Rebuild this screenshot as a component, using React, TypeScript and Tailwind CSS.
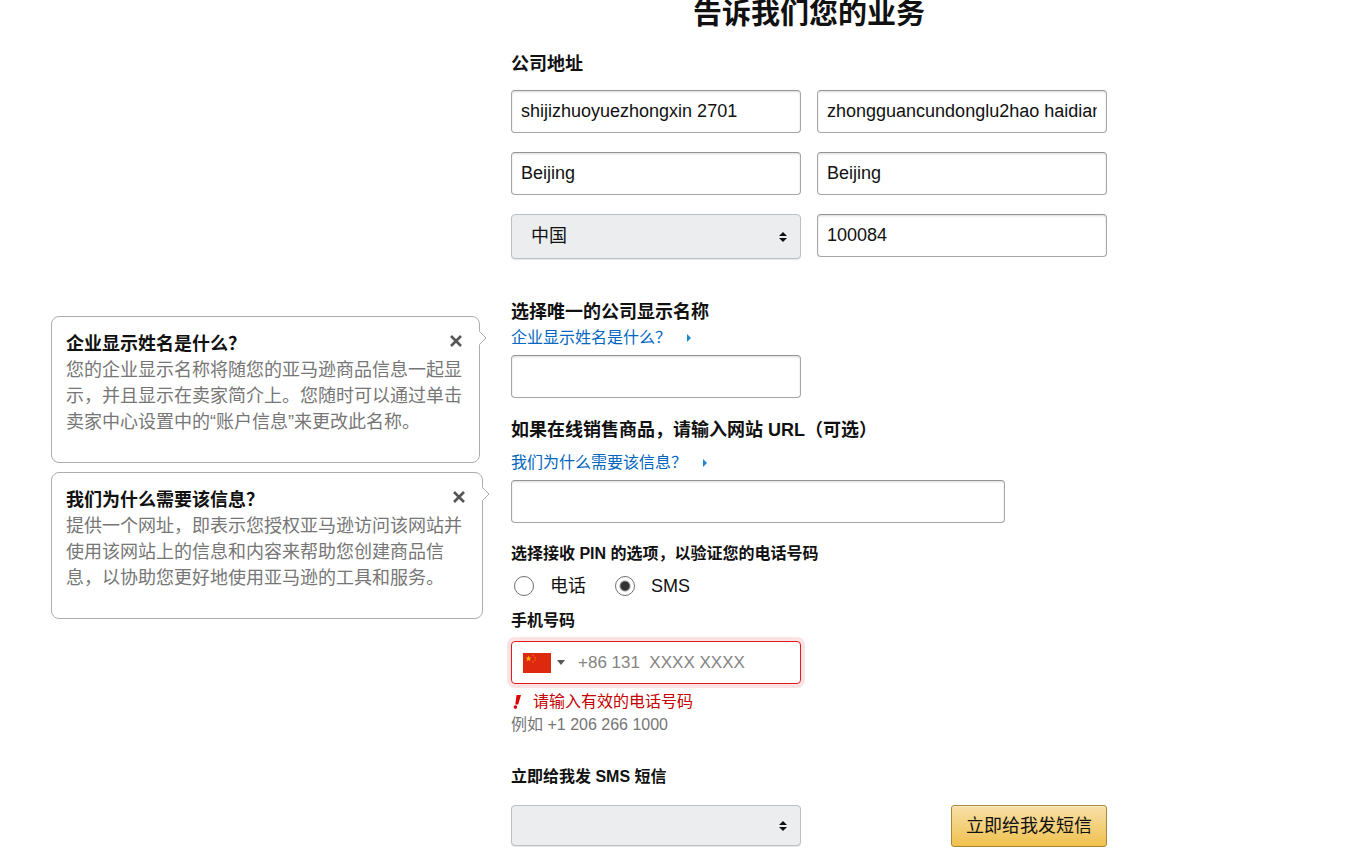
import type { ReactNode } from "react";

const inputClass =
  "block h-[43px] w-full min-w-0 rounded border border-[#a6a6a6] border-t-[#949494] bg-white px-[9px] text-[18px] text-[#111] shadow-[inset_0_1px_2px_rgba(15,17,17,0.15)] outline-none";

const TextField = ({
  label,
  name,
  value,
}: {
  label: string;
  name: string;
  value: string;
}) => (
  <input
    type="text"
    aria-label={label}
    name={name}
    defaultValue={value}
    className={inputClass}
  />
);

const SelectField = ({
  id,
  label,
  className,
  children,
}: {
  id: string;
  label?: string;
  className: string;
  children?: ReactNode;
}) => (
  <div className="relative">
    <select
      id={id}
      aria-label={label}
      className={`block w-full appearance-none rounded border border-[#bbbfc6] bg-[#ecedef] pl-[19px] pr-8 text-[18px] text-[#111] shadow-[0_1px_1px_rgba(15,17,17,0.1)] outline-none ${className}`}
    >
      {children}
    </select>
    <svg
      viewBox="0 0 8 10"
      className="pointer-events-none absolute right-[14px] top-1/2 h-[10px] w-2 -translate-y-1/2"
    >
      <path d="M4 0 8 4H0ZM4 10 0 6h8Z" fill="#111" />
    </svg>
  </div>
);

const HelpLink = ({ children }: { children: ReactNode }) => (
  <a
    href="#"
    className="flex w-fit items-center gap-4 text-[16px] leading-6 text-[#0066c0]"
  >
    {children}
    <svg viewBox="0 0 4 8" className="h-2 w-1">
      <path d="M0 0 4 4 0 8Z" fill="#1e88cf" />
    </svg>
  </a>
);

const HelpCard = ({
  title,
  className,
  children,
}: {
  title: string;
  className: string;
  children: ReactNode;
}) => (
  <section
    className={`relative rounded-lg border border-[#adadad] bg-white px-[14px] pb-[27px] pt-[14px] ${className}`}
  >
    <div className="flex items-start justify-between">
      <h2 className="text-[18px] font-bold leading-[26px]">{title}</h2>
      <button type="button" aria-label="关闭" className="mr-[3px] mt-1">
        <svg viewBox="0 0 12 12" className="h-3 w-3">
          <path d="M1 1 11 11M11 1 1 11" stroke="#555" strokeWidth="2.6" />
        </svg>
      </button>
    </div>
    <p className="text-[18px] leading-[26px] text-[#767676]">{children}</p>
    <svg
      viewBox="0 0 8 14"
      className="absolute -right-2 top-[14px] h-[14px] w-2"
    >
      <path d="M0 0 7 7 0 14Z" fill="#fff" />
      <path d="M.5 .5 7 7 .5 13.5" fill="none" stroke="#adadad" />
    </svg>
  </section>
);

const Radio = ({
  label,
  checked = false,
}: {
  label: string;
  checked?: boolean;
}) => (
  <label className="flex items-center gap-4">
    <input
      type="radio"
      name="pin"
      defaultChecked={checked}
      className="h-5 w-5 appearance-none rounded-full border border-[#707070] bg-white checked:bg-[radial-gradient(circle,#333_0_4px,#fff_6px)]"
    />
    {label}
  </label>
);

const Flag = () => (
  <svg viewBox="0 0 28 20" className="h-5 w-7">
    <path d="M0 0h28v20H0Z" fill="#de2910" />
    <path
      d="m5.5 2.5.8 2.1 2.2.1-1.8 1.4.7 2.2-1.9-1.3-1.9 1.3.7-2.2-1.8-1.4 2.2-.1Z"
      fill="#ffb400"
    />
    <g fill="#e8870c">
      <circle cx="10" cy="2.5" r=".7" />
      <circle cx="12" cy="4.5" r=".7" />
      <circle cx="12" cy="7" r=".7" />
      <circle cx="10" cy="9" r=".7" />
    </g>
  </svg>
);

export default function App() {
  return (
    <main
      lang="zh-CN"
      className="flex gap-7 bg-white pl-[51px] pr-4 font-['Liberation_Sans','Noto_Sans_CJK_SC',sans-serif] text-[#111]"
    >
      <aside className="flex w-[432px] shrink-0 flex-col gap-[9px] pt-[316px]">
        <HelpCard title="企业显示姓名是什么？" className="w-[429px]">
          您的企业显示名称将随您的亚马逊商品信息一起显示，并且显示在卖家简介上。您随时可以通过单击卖家中心设置中的“账户信息”来更改此名称。
        </HelpCard>
        <HelpCard title="我们为什么需要该信息？" className="w-full">
          提供一个网址，即表示您授权亚马逊访问该网站并使用该网站上的信息和内容来帮助您创建商品信息，以协助您更好地使用亚马逊的工具和服务。
        </HelpCard>
      </aside>

      <form className="min-w-0 max-w-[596px] flex-1">
        <h1 className="text-center text-[29px] font-bold leading-7">
          告诉我们您的业务
        </h1>

        <fieldset>
          <legend className="pt-6 text-[18px] font-bold leading-6">
            公司地址
          </legend>
          <div className="mt-[14px] grid grid-cols-2 items-start gap-x-4 gap-y-[19px]">
            <TextField
              label="地址行 1"
              name="address1"
              value="shijizhuoyuezhongxin 2701"
            />
            <TextField
              label="地址行 2"
              name="address2"
              value="zhongguancundonglu2hao haidian"
            />
            <TextField label="城市" name="city" value="Beijing" />
            <TextField label="省份" name="state" value="Beijing" />
            <SelectField id="country" label="国家" className="h-[45px]">
              <option>中国</option>
            </SelectField>
            <TextField label="邮政编码" name="zip" value="100084" />
          </div>
        </fieldset>

        <label
          htmlFor="display-name"
          className="mt-10 block text-[18px] font-bold leading-[26px]"
        >
          选择唯一的公司显示名称
        </label>
        <div className="mb-[5px] mt-px">
          <HelpLink>企业显示姓名是什么？</HelpLink>
        </div>
        <div className="grid grid-cols-2 gap-x-4">
          <input id="display-name" type="text" className={inputClass} />
        </div>

        <label
          htmlFor="website"
          className="mt-5 block text-[18px] font-bold leading-6"
        >
          如果在线销售商品，请输入网站 URL（可选）
        </label>
        <div className="mb-[5px] mt-[9px]">
          <HelpLink>我们为什么需要该信息？</HelpLink>
        </div>
        <div className="max-w-[494px]">
          <input id="website" type="url" className={inputClass} />
        </div>

        <fieldset>
          <legend className="pt-[18px] text-[16px] font-bold leading-[26px]">
            选择接收 PIN 的选项，以验证您的电话号码
          </legend>
          <div className="mt-[7px] flex gap-[29px] pl-[3px] text-[18px] leading-6">
            <Radio label="电话" />
            <Radio label="SMS" checked />
          </div>
        </fieldset>

        <label
          htmlFor="phone"
          className="mt-[11px] block text-[16px] font-bold leading-6"
        >
          手机号码
        </label>
        <div className="mt-2 grid grid-cols-2 gap-x-4">
          <div className="flex h-[43px] items-center rounded border border-[#dd1d1d] bg-white pl-[11px] shadow-[0_0_0_4px_#fbe3e3]">
            <button
              type="button"
              aria-label="选择国家代码"
              className="flex shrink-0 items-center gap-[6px]"
            >
              <Flag />
              <svg viewBox="0 0 8 5" className="h-[5px] w-2">
                <path d="M0 0h8L4 5Z" fill="#555" />
              </svg>
            </button>
            <input
              id="phone"
              type="tel"
              placeholder="+86 131  XXXX XXXX"
              className="ml-[13px] h-full w-full min-w-0 bg-transparent text-[17px] outline-none placeholder:text-[#848484]"
            />
          </div>
        </div>
        <p className="mt-[7px] flex items-center gap-3 pl-[2px] text-[16px] leading-[22px] text-[#c40000]">
          <svg viewBox="0 0 8 14" className="h-[14px] w-2">
            <path d="M3.6 0H8L5.2 9.5H2.3Z" fill="#d00" />
            <circle cx="2.4" cy="12.1" r="1.8" fill="#d00" />
          </svg>
          请输入有效的电话号码
        </p>
        <p className="mt-px text-[16px] leading-[22px] text-[#767676]">
          例如 +1 206 266 1000
        </p>

        <label
          htmlFor="sms-language"
          className="mt-7 block text-[16px] font-bold leading-[26px]"
        >
          立即给我发 SMS 短信
        </label>
        <div className="mt-[15px] grid grid-cols-2 gap-x-4">
          <SelectField id="sms-language" className="h-[41px]" />
          <button
            type="button"
            className="h-[42px] justify-self-end rounded-[3px] border border-[#a88734] bg-linear-to-b from-[#f7dfa5] to-[#f0c14b] px-[14px] text-[18px] shadow-[inset_0_1px_0_rgba(255,255,255,0.4)]"
          >
            立即给我发短信
          </button>
        </div>
      </form>
    </main>
  );
}
